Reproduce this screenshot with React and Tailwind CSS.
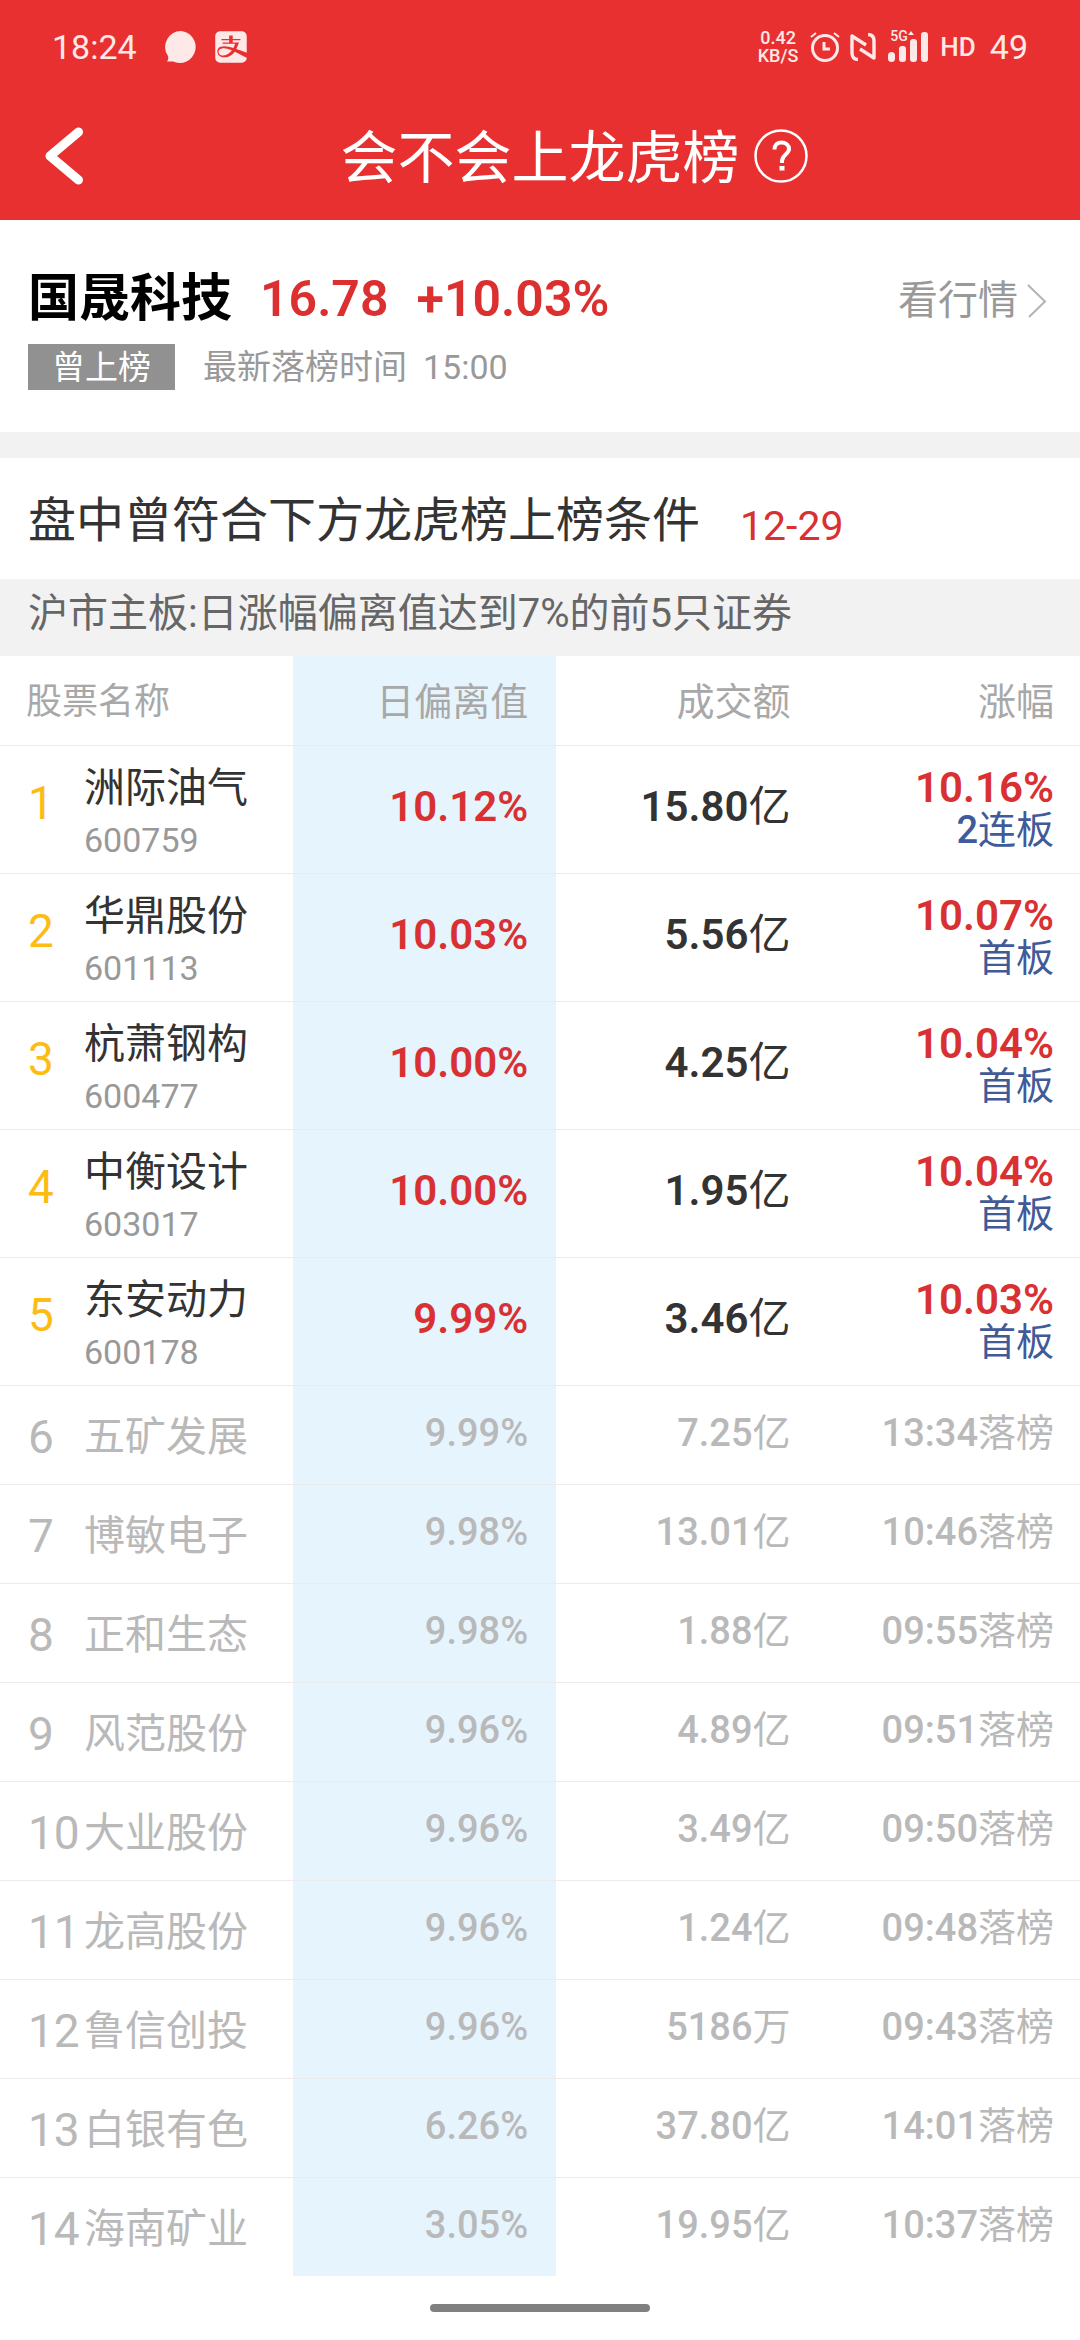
import { FaAlipay } from 'react-icons/fa';

const topStocks = [
  { name: '洲际油气', code: '600759', deviation: '10.12%', amount: '15.80', change: '10.16%', streak: 2 },
  { name: '华鼎股份', code: '601113', deviation: '10.03%', amount: '5.56', change: '10.07%' },
  { name: '杭萧钢构', code: '600477', deviation: '10.00%', amount: '4.25', change: '10.04%' },
  { name: '中衡设计', code: '603017', deviation: '10.00%', amount: '1.95', change: '10.04%' },
  { name: '东安动力', code: '600178', deviation: '9.99%', amount: '3.46', change: '10.03%' },
];

const droppedStocks = [
  { name: '五矿发展', deviation: '9.99%', amount: '7.25', unit: '亿', time: '13:34' },
  { name: '博敏电子', deviation: '9.98%', amount: '13.01', unit: '亿', time: '10:46' },
  { name: '正和生态', deviation: '9.98%', amount: '1.88', unit: '亿', time: '09:55' },
  { name: '风范股份', deviation: '9.96%', amount: '4.89', unit: '亿', time: '09:51' },
  { name: '大业股份', deviation: '9.96%', amount: '3.49', unit: '亿', time: '09:50' },
  { name: '龙高股份', deviation: '9.96%', amount: '1.24', unit: '亿', time: '09:48' },
  { name: '鲁信创投', deviation: '9.96%', amount: '5186', unit: '万', time: '09:43' },
  { name: '白银有色', deviation: '6.26%', amount: '37.80', unit: '亿', time: '14:01' },
  { name: '海南矿业', deviation: '3.05%', amount: '19.95', unit: '亿', time: '10:37' },
];

function AlarmIcon() {
  return (
    <svg width="30" height="32" viewBox="0 0 30 32" fill="none" stroke="currentColor" strokeWidth="3">
      <circle cx="15" cy="17" r="12.5" />
      <path d="M14 11v7h6" />
      <path d="M1 6l5-4M29 6l-5-4" strokeWidth="2" />
    </svg>
  );
}

function NfcIcon() {
  return (
    <svg width="26" height="28" viewBox="0 0 26 28" fill="none" stroke="currentColor" strokeWidth="3.4" strokeLinejoin="round">
      <path d="M8 26.5C4 26.5 2 24 2 20V3l14 9" />
      <path d="M18 1.5c4 0 6 2.5 6 6.5v17l-14-9" />
    </svg>
  );
}

function SignalIcon() {
  return (
    <span className="relative block h-8 w-10">
      <svg width="40" height="32" viewBox="0 0 40 32" fill="currentColor">
        <rect x="0" y="21" width="7" height="10" rx="3.5" />
        <rect x="11" y="15" width="7" height="16" rx="3" />
        <rect x="22" y="8" width="7" height="23" rx="3" />
        <rect x="33" y="1" width="7" height="30" rx="3" />
        <path d="M20 4l3-4 3 4z" />
      </svg>
      <span className="absolute left-0.5 top-0 text-[14px] font-medium leading-[11px]">5G</span>
    </span>
  );
}

function StatusBar() {
  return (
    <div className="flex h-[92px] items-center justify-between px-[52px] pt-0.5 text-[34px] leading-none text-[#ffe8e8]">
      <div className="flex items-center">
        <span>18:24</span>
        <svg className="ml-7" width="32" height="33" viewBox="0 0 32 33" fill="currentColor">
          <path d="M16 0a16 16 0 1 1-8 30.5H2c1.5-2 1.5-4 1-5.5A16 16 0 0 1 16 0z" />
        </svg>
        <FaAlipay className="ml-4" size={36} />
      </div>
      <div className="flex items-center">
        <div className="text-center text-[18px] font-medium leading-[18px]">
          <p>0.42</p>
          <p>KB/S</p>
        </div>
        <span className="ml-3"><AlarmIcon /></span>
        <span className="ml-2.5"><NfcIcon /></span>
        <span className="ml-3"><SignalIcon /></span>
        <span className="ml-3 text-[26px] font-medium">HD</span>
        <span className="ml-3.5">49</span>
      </div>
    </div>
  );
}

function Header() {
  return (
    <header className="bg-[#e83030] text-white">
      <StatusBar />
      <div className="grid h-32 grid-cols-[1fr_auto_1fr] items-center">
        <button type="button" aria-label="返回" className="ml-[42px] justify-self-start">
          <svg width="42" height="60" viewBox="0 0 42 60" fill="none" stroke="currentColor" strokeWidth="9" strokeLinecap="round" strokeLinejoin="round">
            <path d="M36.5 6L8 30l28.5 24" />
          </svg>
        </button>
        <h1 className="pt-1 text-[57px] leading-none">会不会上龙虎榜</h1>
        <button type="button" aria-label="帮助" className="ml-3.5 justify-self-start">
          <svg width="54" height="56" viewBox="0 0 54 56" fill="none" stroke="currentColor">
            <circle cx="27" cy="28" r="25.5" strokeWidth="2.5" />
            <path d="M20.5 21.5c0-4.500 3-7 7-7s7.500 2.500 7.500 6.500c0 5-7 6-7 12v2" strokeWidth="4" />
            <path d="M28 38v4.5" strokeWidth="5" />
          </svg>
        </button>
      </div>
    </header>
  );
}

function StockSummary() {
  return (
    <section className="flex h-[212px] items-start justify-between pl-7 pr-8 pt-[53px]">
      <div>
        <div className="flex items-center leading-none">
          <h2 className="text-[51px] font-bold text-black">国晟科技</h2>
          <span className="ml-7 text-[50px] font-semibold text-[#dc2f2f]">16.78</span>
          <span className="ml-7 text-[50px] font-semibold text-[#dc2f2f]">+10.03%</span>
        </div>
        <div className="mt-5 flex items-center leading-none">
          <span className="bg-[#919191] px-6 pb-1.5 pt-[7px] text-[33px] text-white">曾上榜</span>
          <span className="ml-7 text-[34px] text-[#999999]">最新落榜时间</span>
          <span className="ml-4 text-[34px] text-[#999999]">15:00</span>
        </div>
      </div>
      <a href="#quote" className="flex items-center gap-2 pt-2 text-[40px] leading-none text-[#999999]">
        看行情
        <svg width="22" height="34" viewBox="0 0 22 34" fill="none" stroke="#b3b3b3" strokeWidth="2">
          <path d="M2 1l17 16.5L3 33" />
        </svg>
      </a>
    </section>
  );
}

function TopRow({ stock, rank }) {
  return (
    <tr className="h-32 border-t border-[#ebebeb]">
      <td className="pl-7">
        <div className="flex items-center">
          <span className="w-14 pb-3 text-[46px] text-[#fdbc15]">{rank}</span>
          <div className="pt-1.5">
            <p className="text-[41px] text-[#333333]">{stock.name}</p>
            <p className="mt-3.5 text-[34px] text-[#999999]">{stock.code}</p>
          </div>
        </div>
      </td>
      <td className="bg-[#e6f4fe] pb-1 pr-7 text-right text-[42px] font-semibold text-[#d93131]">{stock.deviation}</td>
      <td className="pb-1 text-right text-[42px] text-[#333333]">
        <span className="font-semibold">{stock.amount}</span>亿
      </td>
      <td className="pb-0.5 pr-[26px] text-right">
        <p className="text-[42px] font-semibold text-[#d93131]">{stock.change}</p>
        <p className="mt-0.5 text-[38px] text-[#3f5b99]">
          {stock.streak ? <><span className="font-medium">{stock.streak}</span>连板</> : '首板'}
        </p>
      </td>
    </tr>
  );
}

function DroppedRow({ stock, rank }) {
  return (
    <tr className="h-[99px] border-t border-[#ebebeb] text-[38px] text-[#b9b9b9]">
      <td className="pl-7 pt-1">
        <div className="flex items-center">
          <span className="w-14 whitespace-nowrap text-[46px]">{rank}</span>
          <span className="pt-0.5 text-[41px]">{stock.name}</span>
        </div>
      </td>
      <td className="bg-[#e6f4fe] pb-1 pr-7 text-right font-medium">{stock.deviation}</td>
      <td className="pb-1 text-right">
        <span className="font-medium">{stock.amount}</span>{stock.unit}
      </td>
      <td className="pb-1 pr-[26px] text-right">
        <span className="font-medium">{stock.time}</span>落榜
      </td>
    </tr>
  );
}

export default function App() {
  return (
    <div className="min-h-screen bg-white font-['Roboto','Noto_Sans_CJK_SC',sans-serif]">
      <Header />
      <main>
        <StockSummary />
        <div className="h-[26px] bg-[#f2f2f2]" />
        <div className="flex h-[121px] items-center px-7 pt-1 leading-none">
          <h2 className="text-[48px] text-[#333333]">盘中曾符合下方龙虎榜上榜条件</h2>
          <span className="ml-10 pt-3 text-[41px] text-[#d93131]">12-29</span>
        </div>
        <p className="flex h-[77px] items-center bg-[#f2f2f2] px-7 pb-2 text-[40px] leading-none text-[#666666]">
          沪市主板:日涨幅偏离值达到7%的前5只证券
        </p>
        <table className="w-full table-fixed border-collapse leading-none">
          <colgroup>
            <col className="w-[27.1%]" />
            <col className="w-[24.4%]" />
            <col className="w-[21.7%]" />
            <col />
          </colgroup>
          <thead>
            <tr className="h-[89px] text-[38px] text-[#a8a8a8]">
              <th className="pl-[26px] pt-1 text-left text-[36px] font-normal">股票名称</th>
              <th className="bg-[#e6f4fe] pr-7 pt-1 text-right font-normal">日偏离值</th>
              <th className="pt-1 text-right font-normal">成交额</th>
              <th className="pr-[26px] pt-1 text-right font-normal">涨幅</th>
            </tr>
          </thead>
          <tbody>
            {topStocks.map((stock, i) => (
              <TopRow key={stock.code} stock={stock} rank={i + 1} />
            ))}
            {droppedStocks.map((stock, i) => (
              <DroppedRow key={stock.name} stock={stock} rank={i + 6} />
            ))}
          </tbody>
        </table>
      </main>
      <div className="flex justify-center pt-7">
        <div className="h-2 w-[220px] rounded-full bg-[#808080]" />
      </div>
    </div>
  );
}
